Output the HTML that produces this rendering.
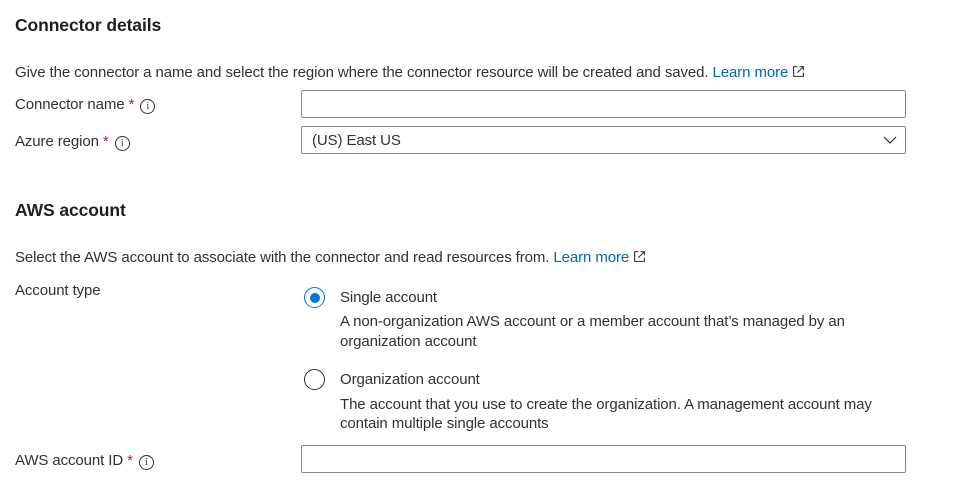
<!DOCTYPE html>
<html><head><style>
body{margin:0;width:975px;height:501px;background:#fff;font-family:"Liberation Sans",sans-serif;color:#323130;position:relative;overflow:hidden}
.a{position:absolute;white-space:nowrap;font-size:15px;letter-spacing:-0.1px}
h2{position:absolute;margin:0;font-size:17.5px;font-weight:bold;color:#201f1e;letter-spacing:-0.1px}
.in{position:absolute;left:301px;width:603px;height:26px;border:1px solid #8a8886;border-radius:2px;box-sizing:content-box}
.req{color:#a4262c}
.i{display:inline-block;width:13px;height:13px;border:1px solid #323130;border-radius:50%;font-size:10px;line-height:13px;text-align:center;vertical-align:0px;margin-left:6px;font-family:"Liberation Serif",serif}
a{color:#0067b8;text-decoration:none}
.ext{display:inline-block;vertical-align:-1px;margin-left:4px}
.r{position:absolute;left:304px;width:21px;height:21px;border:1px solid #323130;border-radius:50%;box-sizing:border-box}
.r.on{border-color:#0078d4}
.r.on:after{content:"";position:absolute;left:4.5px;top:4.5px;width:10px;height:10px;border-radius:50%;background:#0078d4}
</style></head><body>
<h2 style="left:15px;top:15px">Connector details</h2>
<div class="a" style="left:15px;top:64px">Give the connector a name and select the region where the connector resource will be created and saved. <a>Learn more</a><svg class="ext" width="13" height="13" viewBox="0 0 12 12" fill="none" stroke="#323130" stroke-width="1"><path d="M5 1.5H1.5v9h9V7M7 1.5h3.5V5M10.5 1.5L5 7"/></svg></div>
<div class="a" style="left:15px;top:96px">Connector name <span class="req">*</span><span class="i">i</span></div>
<div class="in" style="top:90px"></div>
<div class="a" style="left:15px;top:133px">Azure region <span class="req">*</span><span class="i">i</span></div>
<div class="in" style="top:126px"><span class="a" style="left:10px;top:5px">(US) East US</span><svg style="position:absolute;right:8px;top:9px" width="14" height="8" viewBox="0 0 14 8" fill="none" stroke="#323130" stroke-width="1.2"><path d="M1 1l6 6 6-6"/></svg></div>
<h2 style="left:15px;top:200px">AWS account</h2>
<div class="a" style="left:15px;top:249px">Select the AWS account to associate with the connector and read resources from. <a>Learn more</a><svg class="ext" width="13" height="13" viewBox="0 0 12 12" fill="none" stroke="#323130" stroke-width="1"><path d="M5 1.5H1.5v9h9V7M7 1.5h3.5V5M10.5 1.5L5 7"/></svg></div>
<div class="a" style="left:15px;top:282px">Account type</div>
<div class="r on" style="top:287px"></div>
<div class="a" style="left:340px;top:289px">Single account</div>
<div class="a" style="left:340px;top:313px">A non-organization AWS account or a member account that’s managed by an</div>
<div class="a" style="left:340px;top:333px">organization account</div>
<div class="r" style="top:369px"></div>
<div class="a" style="left:340px;top:371px">Organization account</div>
<div class="a" style="left:340px;top:396px">The account that you use to create the organization. A management account may</div>
<div class="a" style="left:340px;top:415px">contain multiple single accounts</div>
<div class="a" style="left:15px;top:452px">AWS account ID <span class="req">*</span><span class="i">i</span></div>
<div class="in" style="top:445px"></div>
</body></html>
